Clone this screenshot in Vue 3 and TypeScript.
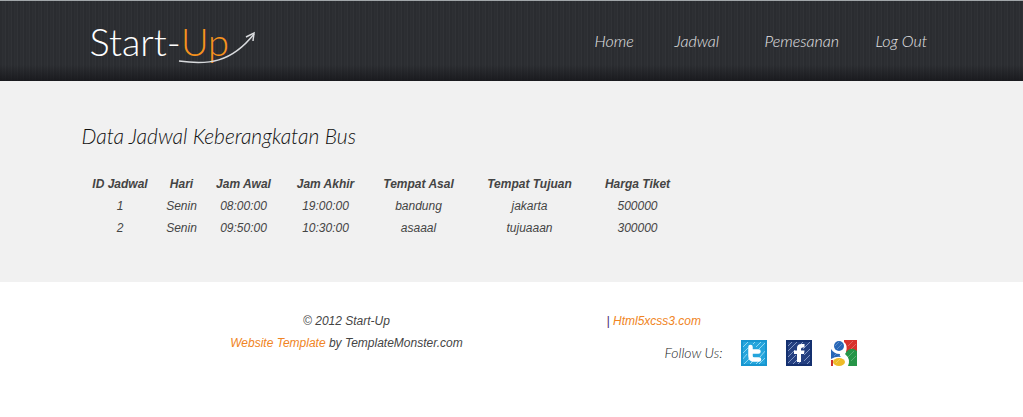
<script setup lang="ts">
interface Trip {
  id: number
  day: string
  departs: string
  arrives: string
  from: string
  to: string
  price: number
}

const links: string[] = ['Home', 'Jadwal', 'Pemesanan', 'Log Out']
const headings: string[] = ['ID Jadwal', 'Hari', 'Jam Awal', 'Jam Akhir', 'Tempat Asal', 'Tempat Tujuan', 'Harga Tiket']
const trips: Trip[] = [
  { id: 1, day: 'Senin', departs: '08:00:00', arrives: '19:00:00', from: 'bandung', to: 'jakarta', price: 500000 },
  { id: 2, day: 'Senin', departs: '09:50:00', arrives: '10:30:00', from: 'asaaal', to: 'tujuaaan', price: 300000 },
]
</script>

<template>
  <div class="page">
    <header class="header">
      <div class="wrap bar">
        <a class="logo" href="#">
          <span>Start-</span><span class="up">Up</span>
          <svg class="swoosh" viewBox="0 0 80 36" aria-hidden="true">
            <path d="M1 30C30 34 53 32 76 3" />
            <path d="M68 6L76 2L75 10" />
          </svg>
        </a>
        <nav class="nav">
          <a v-for="link in links" :key="link" href="#">{{ link }}</a>
        </nav>
      </div>
    </header>

    <main class="content">
      <div class="wrap">
        <h1>Data Jadwal Keberangkatan Bus</h1>
        <table>
          <colgroup>
            <col class="c-id" /><col class="c-day" /><col class="c-start" /><col class="c-end" />
            <col class="c-from" /><col class="c-to" /><col class="c-price" />
          </colgroup>
          <thead>
            <tr><th v-for="h in headings" :key="h" scope="col">{{ h }}</th></tr>
          </thead>
          <tbody>
            <tr v-for="trip in trips" :key="trip.id">
              <td>{{ trip.id }}</td>
              <td>{{ trip.day }}</td>
              <td>{{ trip.departs }}</td>
              <td>{{ trip.arrives }}</td>
              <td>{{ trip.from }}</td>
              <td>{{ trip.to }}</td>
              <td>{{ trip.price }}</td>
            </tr>
          </tbody>
        </table>
      </div>
    </main>

    <footer class="wrap footer">
      <div class="credits">
        <div>© 2012 Start-Up</div>
        <div><a href="#">Website Template</a> by TemplateMonster.com</div>
      </div>
      <div>
        <div><span class="divider">|</span> <a href="#">Html5xcss3.com</a></div>
        <div class="social">
          <span class="follow">Follow Us:</span>
          <a href="#" aria-label="Twitter">
            <svg viewBox="0 0 26 26">
              <rect width="26" height="26" fill="#25a5dc" />
              <path d="M1 8L8 1M1 14L7 8M1 20L6 14M2 25L9 18M8 25L12 21M15 7L21 1M18 9L25 2M19 17L25 10M18 24L25 17M14 25L18 21M12 4L15 1" stroke="#8ed6f2" stroke-width="1" fill="none" />
              <path d="M9.500 7V16Q9.500 19.500 13 19.500H18M9.500 11.500H17.500" fill="none" stroke="#fff" stroke-width="4.500" stroke-linecap="round" stroke-linejoin="round" />
              <rect x="1" y="1" width="24" height="24" fill="none" stroke="#1796d0" stroke-width="2" />
            </svg>
          </a>
          <a href="#" aria-label="Facebook">
            <svg viewBox="0 0 26 26">
              <rect width="26" height="26" fill="#243f80" />
              <path d="M1 7L7 1M1 12L11 2M1 18L9 10M1 24L10 15M6 25L12 19M11 25L14 22M17 9L25 1M18 15L25 8M18 21L25 14M20 25L25 20M15 4L18 1" stroke="#8297c4" stroke-width="1" fill="none" />
              <path d="M11 22V14H8V10.500H11V8Q11 4 15.500 4H18.500V7.500H16.500Q15 7.500 15 9V10.500H18.500L18 14H15V22Z" fill="#fff" />
              <rect x="1" y="1" width="24" height="24" fill="none" stroke="#14306f" stroke-width="2" />
            </svg>
          </a>
          <a href="#" aria-label="Google">
            <svg viewBox="0 0 26 26">
              <rect width="26" height="26" fill="#fff" />
              <path d="M13 0H26V12H15Q17 5 13 2Z" fill="#d8322d" />
              <path d="M14 14Q17 8 23 9L26 11V26H17Q20 19 14 14Z" fill="#269548" />
              <path d="M0 9Q3 14 9 14Q8 16 10 17Q5 16 0 19Z" fill="#2867b7" />
              <path d="M0 20H2V26H0Z" fill="#cf332e" />
              <ellipse cx="8" cy="22" rx="6" ry="4" fill="#eebb28" />
              <ellipse cx="8" cy="6" rx="5" ry="5" fill="#2867b7" />
              <path d="M4 6L8 2M6 9L11 4M17 6L22 1M20 9L25 4M17 17L23 11M20 21L25 16M5 23L9 19M3 16L6 13" fill="none" stroke="#fff" stroke-width="1" opacity="0.25" />
            </svg>
          </a>
        </div>
      </div>
    </footer>
  </div>
</template>

<style>
body {
  margin: 0;
  background: #fff;
}
</style>

<style scoped>
.page {
  font: italic 12px/22px "Liberation Sans", Arial, sans-serif;
  color: #444;
}
.wrap {
  max-width: 860px;
  margin: 0 auto;
}
.header {
  box-sizing: border-box;
  min-height: 81px;
  border-top: 1px solid #a2a7aa;
  background:
    linear-gradient(to bottom, transparent 80%, rgba(18, 18, 22, 0.7)),
    repeating-linear-gradient(to right, #2a2c30 0 2px, #2e3034 2px 3px, #2c2e32 3px 5px, #313337 5px 6px);
}
.bar {
  display: flex;
  justify-content: space-between;
  align-items: center;
  min-height: 80px;
}
.logo {
  position: relative;
  display: flex;
  align-items: baseline;
  margin-left: 8px;
  font: 300 38px/60px Lato, sans-serif;
  color: #fff;
  text-decoration: none;
}
.up {
  color: #f7931e;
}
.swoosh {
  position: absolute;
  left: 88px;
  top: 20px;
  width: 80px;
  height: 36px;
  fill: none;
  stroke: #d8dadd;
  stroke-width: 1.500;
}
.nav {
  display: grid;
  grid-template-columns: 80px 90px 111px 60px;
  margin-right: 6px;
}
.nav a {
  font: italic 300 16px/24px Lato, sans-serif;
  color: #e4e4e6;
  text-decoration: none;
}
.content {
  padding: 40px 0 43px;
  background: #f1f1f1;
}
h1 {
  margin: 0 0 22px;
  font: italic 300 21px/30px Lato, sans-serif;
  color: #111;
}
table {
  table-layout: fixed;
  width: 603px;
  border-collapse: collapse;
}
th,
td {
  padding: 0;
  text-align: center;
}
.c-id { width: 77px; }
.c-day { width: 46px; }
.c-start { width: 78px; }
.c-end { width: 86px; }
.c-from { width: 100px; }
.c-to { width: 122px; }
.c-price { width: 94px; }
.footer {
  display: grid;
  grid-template-columns: 525px 1fr;
  padding: 28px 0 44px;
}
.footer a {
  color: #f08423;
  text-decoration: none;
}
.credits {
  padding-left: 5px;
  text-align: center;
}
.divider {
  color: #4b2a6b;
}
.social {
  display: flex;
  align-items: center;
  gap: 19px;
  margin: 8px 0 0 58px;
}
.social a,
.social svg {
  display: block;
  width: 26px;
  height: 26px;
}
.follow {
  font: italic 300 14px/26px Lato, sans-serif;
  color: #222;
}
</style>
